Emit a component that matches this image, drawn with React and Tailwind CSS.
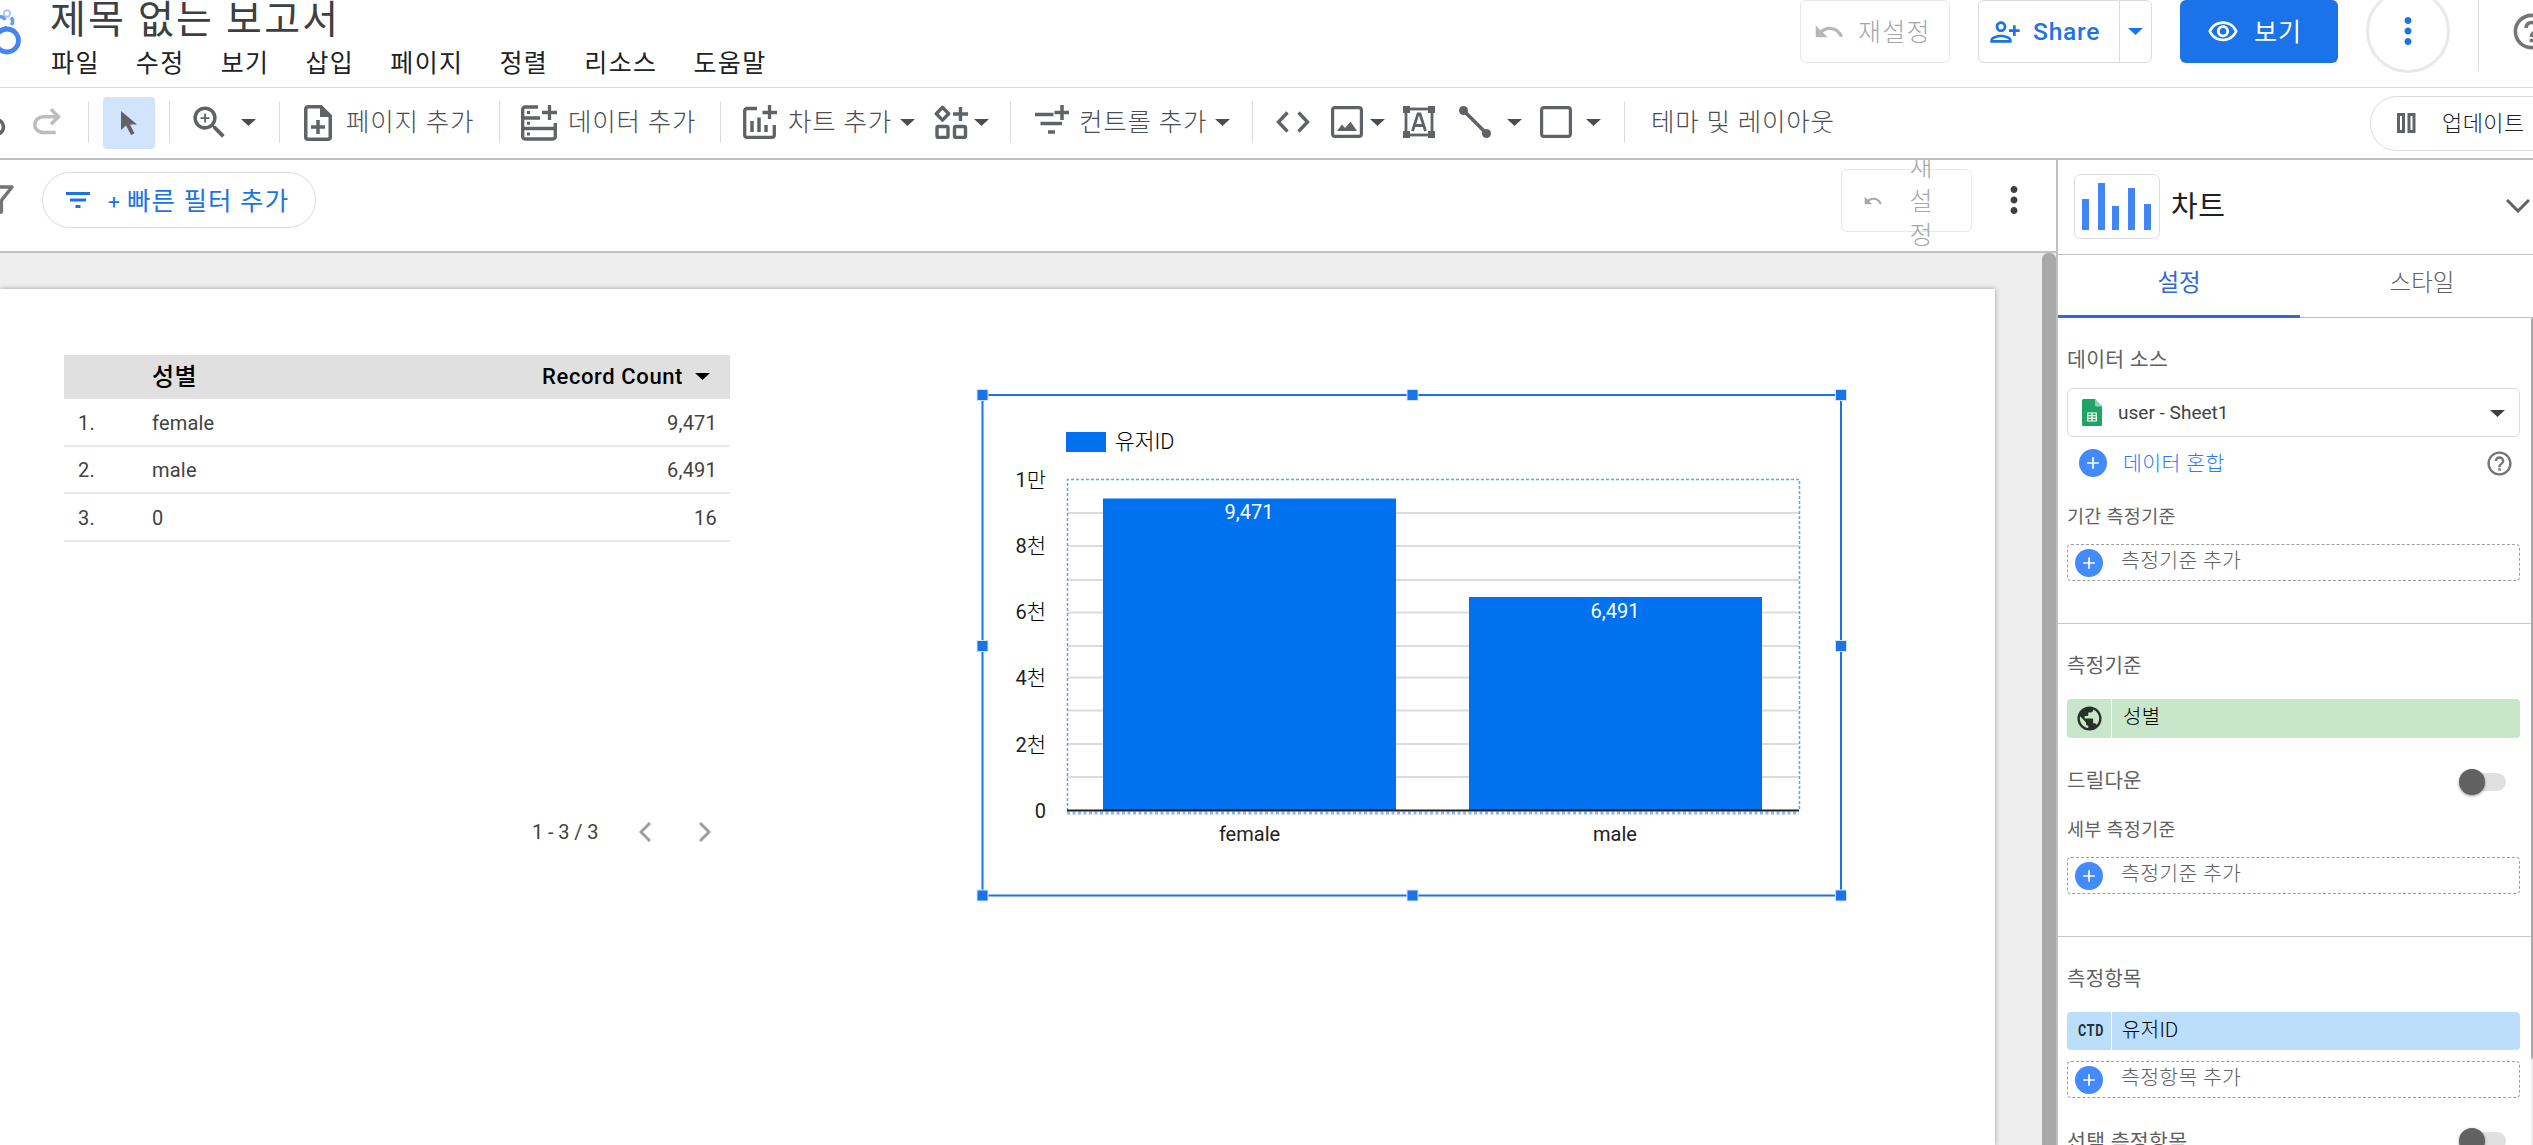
import clsx from "clsx";
import {
  MdAdd,
  MdHelpOutline,
  MdMoreVert,
  MdOutlineFilterAlt,
  MdOutlinePersonAddAlt1,
  MdOutlineVisibility,
  MdPublic,
  MdUndo,
  MdZoomIn,
} from "react-icons/md";

const MENUS = ["파일", "수정", "보기", "삽입", "페이지", "정렬", "리소스", "도움말"];

const TABLE_ROWS = [
  { name: "female", count: "9,471" },
  { name: "male", count: "6,491" },
  { name: "0", count: "16" },
];

const Y_LABELS = [
  { text: "1만", y: 487 },
  { text: "8천", y: 552.5 },
  { text: "6천", y: 618.5 },
  { text: "4천", y: 685 },
  { text: "2천", y: 751.5 },
  { text: "0", y: 817.5 },
];

const GRID_Y = [513, 546, 580, 612.5, 646, 677.5, 710.5, 744, 777];

const HANDLES = [
  [982.5, 395], [1412.5, 395], [1841, 395],
  [982.5, 646], [1841, 646],
  [982.5, 895.5], [1412.5, 895.5], [1841, 895.5],
];

function Caret({ className }) {
  return (
    <svg viewBox="0 0 15 7" className={clsx("h-[7px] w-[15px] shrink-0 fill-current", className)}>
      <path d="M0 0h15L7.500 7z" />
    </svg>
  );
}

function Divider({ className }) {
  return <div className={clsx("h-[42px] w-px shrink-0 bg-[#dadce0]", className)} />;
}

function Logo() {
  return (
    <svg viewBox="0 0 24 60" className="h-[60px] w-6 shrink-0" fill="none">
      <circle cx="7" cy="13.500" r="3.200" stroke="#a8c7fa" strokeWidth="2" />
      <path d="M0 16.500Q4 17 5 20M11 17.500Q14 20.500 11.500 25" stroke="#669df6" strokeWidth="3.500" />
      <path d="M0 30.500L7 27.500" stroke="#3b78e7" strokeWidth="4" />
      <circle cx="7" cy="40.500" r="11.500" stroke="#4285f4" strokeWidth="4.800" />
    </svg>
  );
}

function Header() {
  return (
    <header className="flex h-[88px] shrink-0 border-b border-[#dadce0]">
      <Logo />
      <div className="ml-[26px] flex flex-col pt-px">
        <h1 className="h-[43px] text-[39px] leading-[39px] tracking-[2.2px] whitespace-nowrap text-[#3c4043]">
          제목 없는 보고서
        </h1>
        <nav className="ml-px flex gap-[36px] text-[25px] leading-[39px] tracking-[1.4px] whitespace-nowrap text-[#202124]">
          {MENUS.map((m) => (
            <span key={m}>{m}</span>
          ))}
        </nav>
      </div>
      <div className="ml-auto flex shrink-0">
        <button className="flex h-[63px] w-[150px] items-center rounded-md border border-[#e8e8e8] pl-3 text-[25px] font-light tracking-[1.2px] whitespace-nowrap text-[#a5a7aa]">
          <MdUndo className="mr-[13px] size-8 text-[#b5b7ba]" />
          <span className="mt-0.5">재설정</span>
        </button>
        <div className="ml-7 flex h-[63px] w-[174px] rounded-md border border-[#dadce0] text-[#1a73e8]">
          <button className="flex w-[141px] items-center border-r border-[#dadce0] pl-2.5 text-[24.5px] font-medium tracking-[0.8px]">
            <MdOutlinePersonAddAlt1 className="mr-3 size-8" />
            <span className="mt-0.5">Share</span>
          </button>
          <button className="flex flex-1 items-center justify-center">
            <Caret className="w-[13px]" />
          </button>
        </div>
        <button className="ml-7 flex h-[63px] w-[158px] items-center rounded-md bg-[#1a73e8] pl-[27px] text-[25px] tracking-[1px] whitespace-nowrap text-white">
          <MdOutlineVisibility className="mr-[15px] size-8" />
          <span className="mt-0.5">보기</span>
        </button>
        <button className="-mt-[11px] ml-7 flex size-[84px] items-center justify-center rounded-full border-[3px] border-[#e9e9e9] text-[#1a73e8]">
          <MdMoreVert className="size-[42px]" />
        </button>
        <div className="ml-7 h-[71px] w-px bg-[#dadce0]" />
        <div className="w-[54px] overflow-hidden pt-2.5 pl-[31px]">
          <MdHelpOutline className="size-[43px] text-[#757575]" />
        </div>
      </div>
    </header>
  );
}

function Toolbar() {
  return (
    <div className="flex h-[72px] shrink-0 items-center overflow-hidden border-b-2 border-[#bdc1c6] pb-0.5 text-[25.5px] font-light tracking-[0.8px] whitespace-nowrap text-[#4a4d51]">
      <svg viewBox="0 0 8 42" className="mt-1.5 h-[42px] w-2 shrink-0" fill="none" stroke="#5f6368" strokeWidth="3.500">
        <path d="M-6 15.500h2a7.500 7.500 0 0 1 0 15h-3" />
      </svg>
      <svg viewBox="0 0 24 24" className="ml-[18px] size-[42px] shrink-0 fill-[#bdbdbd]">
        <path d="M9.900 19q-2.425 0-4.163-1.575T4 13.500t1.738-3.925T9.900 8h6.300l-2.600-2.600L15 4l5 5-5 5-1.400-1.400 2.600-2.600H9.900q-1.575 0-2.738 1T6 13.500T7.163 16T9.900 17H17v2z" />
      </svg>
      <Divider className="ml-5" />
      <div className="mt-0.5 ml-3.5 flex h-[52px] w-[52px] shrink-0 items-center justify-center rounded-sm bg-[#d2e3fc]">
        <svg viewBox="0 0 16 24" className="h-6 w-4 fill-[#5f6368]">
          <path d="M0 0v19l5-4.500 5 9.500 3.500-1.500L9 13.500h7z" />
        </svg>
      </div>
      <Divider className="ml-3.5" />
      <MdZoomIn className="ml-[18px] size-[43px] shrink-0 fill-[#5f6368]" />
      <Caret className="ml-[10px]" />
      <Divider className="ml-[23px]" />

      <svg viewBox="0 0 28 36" className="mt-0.5 ml-6 h-9 w-7 shrink-0" fill="none" stroke="#5f6368" strokeWidth="3.500">
        <path d="M17 1.750H4A2.250 2.250 0 0 0 1.750 4v28A2.250 2.250 0 0 0 4 34.250h20A2.250 2.250 0 0 0 26.250 32V11z" />
        <path d="M16 1v11h11z" fill="#5f6368" stroke="none" />
        <path d="M14 15v14M7 22h14" />
      </svg>
      <span className="ml-3.5 w-[153px] shrink-0">페이지 추가</span>
      <Divider />

      <svg viewBox="0 0 36 36" className="mt-0.5 ml-[21px] size-9 shrink-0" fill="none" stroke="#5f6368" strokeWidth="3.300">
        <path d="M17 2H4a2.300 2.300 0 0 0-2.300 2.300v27.400A2.300 2.300 0 0 0 4 34h28a2.300 2.300 0 0 0 2.300-2.300V18M1.700 13H19M1.700 23.500h32.600" />
        <path d="M28.500 0v15M21 7.500h15" />
        <path d="M6 7.500h3M6 18.300h3M6 29h3" strokeWidth="3" />
      </svg>
      <span className="ml-[11px] w-[152px] shrink-0">데이터 추가</span>
      <Divider />

      <svg viewBox="0 0 34 34" className="ml-[22px] size-[34px] shrink-0" fill="none" stroke="#5f6368" strokeWidth="3.300">
        <path d="M14 3.500H4A2.300 2.300 0 0 0 1.700 5.800V30A2.300 2.300 0 0 0 4 32.300h25a2.300 2.300 0 0 0 2.300-2.300V20M26.500 0v14M19.500 7.500h14.500" />
        <path d="M9 16v11M16 12.500V27M23 20v7" strokeWidth="3.500" />
      </svg>
      <span className="ml-[11px] w-[112px] shrink-0">차트 추가</span>
      <Caret />
      <svg viewBox="0 0 34 34" className="ml-[19px] size-[34px] shrink-0" fill="none" stroke="#5f6368" strokeWidth="3.400">
        <path d="M8.500 2.300l6.200 6.400-6.200 6.400-6.200-6.400z" strokeLinejoin="round" />
        <rect x="3" y="21.500" width="11" height="11" rx="1.500" />
        <rect x="20.500" y="21.500" width="11" height="11" rx="1.500" />
        <path d="M26.500 2v14M19 9h15" />
      </svg>
      <Caret className="ml-1.5" />
      <Divider className="ml-[21px]" />

      <svg viewBox="0 0 34 34" className="ml-6 size-[34px] shrink-0" fill="none" stroke="#5f6368" strokeWidth="3.500">
        <path d="M0 9.500h18.500M5.500 18.500H27M13 27h7M27 0v15M19.500 7.500H34" />
      </svg>
      <span className="ml-[10px] w-[136px] shrink-0">컨트롤 추가</span>
      <Caret />
      <Divider className="ml-[22px]" />

      <svg viewBox="0 0 34 22" className="ml-[23px] h-[22px] w-[34px] shrink-0" fill="none" stroke="#5f6368" strokeWidth="3.400">
        <path d="M11.500 1.500L2.500 11l9 9.500M22.500 1.500l9 9.500-9 9.500" />
      </svg>
      <svg viewBox="0 0 32 32" className="ml-[21px] size-8 shrink-0" fill="none" stroke="#5f6368" strokeWidth="3.200">
        <rect x="1.600" y="1.600" width="28.800" height="28.800" rx="2.500" />
        <path d="M6 25l5-6.500 3 3.500 5.500-6.500L26 25z" fill="#5f6368" stroke="none" />
      </svg>
      <Caret className="ml-[7px]" />
      <svg viewBox="0 0 32 32" className="ml-[18px] size-8 shrink-0" fill="none" stroke="#5f6368" strokeWidth="2.800">
        <rect x="3" y="3" width="26" height="26" />
        <path d="M0 0h7v7H0zM25 0h7v7h-7zM0 25h7v7H0zM25 25h7v7h-7z" fill="#5f6368" stroke="none" />
        <path d="M9.500 25L15 8h2l5.500 17M11.500 19.500h9" />
      </svg>
      <svg viewBox="0 0 32 32" className="ml-6 size-8 shrink-0" stroke="#5f6368" strokeWidth="3.500">
        <path d="M4.500 4.500l23 23" />
        <circle cx="4.500" cy="4.500" r="4.500" fill="#5f6368" stroke="none" />
        <circle cx="27.500" cy="27.500" r="4.500" fill="#5f6368" stroke="none" />
      </svg>
      <Caret className="ml-4" />
      <svg viewBox="0 0 32 32" className="ml-[18px] size-8 shrink-0" fill="none" stroke="#5f6368" strokeWidth="3.200">
        <rect x="1.600" y="1.600" width="28.800" height="28.800" rx="2.500" />
      </svg>
      <Caret className="ml-[14px]" />
      <Divider className="ml-[23px]" />
      <span className="ml-[26px] shrink-0">테마 및 레이아웃</span>

      <button className="mt-0.5 ml-auto flex h-[55px] w-[163px] shrink-0 items-center overflow-hidden rounded-l-[27px] border border-r-0 border-[#dadce0] pl-[26px] text-[22px] tracking-[0.4px] text-[#202124] [word-spacing:2px]">
        <svg viewBox="0 0 19 20" className="mr-[26px] h-5 w-[19px] shrink-0" fill="none" stroke="#5f6368" strokeWidth="3">
          <rect x="1.500" y="1.500" width="5" height="17" />
          <rect x="12" y="1.500" width="5" height="17" />
        </svg>
        업데이트 일시중지
      </button>
    </div>
  );
}

function FilterBar() {
  return (
    <div className="flex h-[93px] shrink-0 overflow-hidden border-b-2 border-[#bdc1c6]">
      <div className="flex w-[42px] shrink-0 overflow-hidden pt-[18px]">
        <MdOutlineFilterAlt className="-ml-[22px] size-[43px] shrink-0 text-[#757575]" />
      </div>
      <button className="mt-3 flex h-14 w-[274px] items-center rounded-full border border-[#dadce0] pl-[23px] text-[25.5px] tracking-[1.1px] whitespace-nowrap text-[#1a73e8]">
        <svg viewBox="0 0 24 16" className="mr-[18px] h-4 w-6 shrink-0 fill-current">
          <path d="M0 0h24v3H0zM4 6.500h16v3H4zM9.500 13h5v3h-5z" />
        </svg>
        <span className="mt-1.5 mr-1.5 text-[21px]">+</span>
        <span className="mt-0.5">빠른 필터 추가</span>
      </button>
      <button className="mt-[9px] ml-auto flex h-[63px] w-[131px] items-center rounded-md border border-[#e8e8e8] pl-[21px] text-[#a5a7aa]">
        <MdUndo className="mr-[26px] size-5 shrink-0" />
        <span className="mt-0.5 flex w-6 flex-col text-[25px] leading-[34px] font-light">
          <span>재</span>
          <span>설</span>
          <span>정</span>
        </span>
      </button>
      <MdMoreVert className="mt-[19px] mr-[21px] ml-[21px] size-[42px] text-[#3c4043]" />
    </div>
  );
}

function DataTable() {
  return (
    <div className="absolute top-[102px] left-16 w-[666px] text-[20px] tracking-[0.2px] text-[#424242]">
      <div className="flex h-11 items-center bg-[#e0e0e0] pr-[20px] pb-px pl-[88px] font-medium text-black">
        <span className="text-[24px] tracking-[0.5px]">성별</span>
        <span className="ml-auto text-[22px] tracking-[0.6px]">Record Count</span>
        <Caret className="ml-3 h-[6px] w-[11px]" />
      </div>
      {TABLE_ROWS.map((row, i) => (
        <div key={row.name} className="flex h-[47.500px] items-center border-b-2 border-[#e8e8e8] pt-0.5 pr-[13px] pl-3.5">
          <span className="w-[74px]">{i + 1}.</span>
          <span>{row.name}</span>
          <span className="ml-auto">{row.count}</span>
        </div>
      ))}
    </div>
  );
}

function Pager() {
  return (
    <div className="absolute top-[567px] left-[532px] flex h-6 items-center text-[20px] text-[#424242]">
      <span className="w-[107px] tracking-[-0.1px]">1 - 3 / 3</span>
      <svg viewBox="0 0 12 20" className="h-5 w-3" fill="none" stroke="#9e9e9e" strokeWidth="3">
        <path d="M11 1L2 10l9 9" />
      </svg>
      <svg viewBox="0 0 12 20" className="ml-12 h-5 w-3" fill="none" stroke="#9e9e9e" strokeWidth="3">
        <path d="M1 1l9 9-9 9" />
      </svg>
    </div>
  );
}

function BarChart() {
  return (
    <svg viewBox="970 380 884 530" className="absolute top-[127px] left-[970px] h-[530px] w-[884px]" fontSize="20">
      <rect x="1066" y="432" width="40" height="20" fill="#0072f0" />
      <text x="1115" y="449" fill="#000" fontSize="21.5" fontWeight="300">유저ID</text>
      {Y_LABELS.map((l) => (
        <text key={l.text} x="1046" y={l.y} textAnchor="end" fill="#212121">
          {l.text[0]}
          <tspan fontWeight="300" fontSize="21" fill="#000">{l.text.slice(1)}</tspan>
        </text>
      ))}
      <g stroke="#dcdcdc" strokeWidth="2">
        {GRID_Y.map((y) => (
          <path key={y} d={`M1067 ${y}H1799`} />
        ))}
      </g>
      <rect x="1103" y="498.500" width="293" height="312" fill="#0072f0" />
      <rect x="1469" y="597" width="293" height="213" fill="#0072f0" />
      <path d="M1067.500 811V479.500H1799.500V811" fill="none" stroke="#669df6" strokeDasharray="3 2" strokeWidth="1.500" />
      <path d="M1067 813H1799" stroke="#8ab4f8" strokeDasharray="3 2.500" strokeWidth="3" />
      <path d="M1067 810.500H1799" stroke="#212121" strokeWidth="2" />
      <g textAnchor="middle" fill="#fff">
        <text x="1249" y="519">9,471</text>
        <text x="1615" y="618">6,491</text>
      </g>
      <g textAnchor="middle" fill="#212121">
        <text x="1249.500" y="841">female</text>
        <text x="1615" y="841">male</text>
      </g>
      <rect x="982.500" y="395" width="858.500" height="500.500" fill="none" stroke="#1a73e8" strokeWidth="2" />
      {HANDLES.map(([x, y]) => (
        <rect key={`${x}-${y}`} x={x - 5.5} y={y - 5.5} width="11" height="11" fill="#1a73e8" stroke="#d2e3fc" />
      ))}
    </svg>
  );
}

function Canvas() {
  return (
    <div className="flex min-h-0 flex-1 bg-[#eee]">
      <div className="relative mt-9 w-[1995px] bg-white shadow-[0_0_5px_rgba(0,0,0,0.35)]">
        <div className="absolute inset-x-0 -top-9 h-[892px]">
          <DataTable />
          <Pager />
          <BarChart />
        </div>
      </div>
      <div className="ml-auto w-3.5 rounded-t-md bg-[#a9a9a9]" />
    </div>
  );
}

function AddField({ label, className }) {
  return (
    <div className={clsx("flex h-[37px] w-[453px] shrink-0 items-center rounded border border-dashed border-[#9e9e9e] pl-[7px]", className)}>
      <PlusDot />
      <span className="mb-0.5 ml-[18px] text-[20.5px] font-light tracking-[0.3px] text-[#616161]">{label}</span>
    </div>
  );
}

function PlusDot() {
  return (
    <span className="flex size-7 shrink-0 items-center justify-center rounded-full bg-[#448aff] text-white">
      <MdAdd className="size-5" />
    </span>
  );
}

function FieldLabel({ children, className }) {
  return (
    <div className={clsx("h-6 shrink-0 leading-[26px] whitespace-nowrap text-[#616161]", className)}>{children}</div>
  );
}

function Toggle() {
  return (
    <span className="mr-[25px] flex h-[26px] w-[47px] items-center">
      <span className="z-10 size-[26px] shrink-0 rounded-full bg-[#616161] shadow-[0_1px_3px_rgba(0,0,0,0.4)]" />
      <span className="-ml-[15px] h-[18px] w-9 shrink-0 rounded-full bg-[#e0e0e0]" />
    </span>
  );
}

function SidePanel() {
  return (
    <aside className="flex w-[477px] shrink-0 flex-col overflow-hidden border-l-2 border-[#bdc1c6] whitespace-nowrap">
      <div className="flex h-[95px] shrink-0 items-center border-b border-[#bdc1c6] pl-4">
        <svg viewBox="0 0 86 65" className="-mt-px h-[65px] w-[86px] shrink-0">
          <rect x="0.500" y="0.500" width="85" height="64" rx="6" fill="#fff" stroke="#dadce0" />
          <path d="M8 25h7v31H8zM24 9h7v47h-7zM38 32h7v24h-7zM54 14h7v42h-7zM70 30h7v26h-7z" fill="#4285f4" />
        </svg>
        <span className="mt-px ml-[11px] text-[29px] tracking-[0.5px] text-[#202124]">차트</span>
        <svg viewBox="0 0 24 14" className="mt-[-2px] mr-[3px] ml-auto h-3.5 w-6" fill="none" stroke="#5f6368" strokeWidth="3">
          <path d="M1 1l11 11L23 1" />
        </svg>
      </div>
      <div className="flex h-[63px] shrink-0 border-b border-[#bdbdbd] text-center text-[23.5px] leading-[57px]">
        <div className="-mb-px w-[242px] shrink-0 border-b-[3px] border-[#3367d6] text-[#3367d6]">설정</div>
        <div className="w-[244px] shrink-0 font-light text-[#616161]">스타일</div>
      </div>
      <div className="flex min-h-0 flex-1">
        <div className="flex min-w-0 flex-1 flex-col pl-[9px] text-[20px] tracking-[0.3px]">
          <FieldLabel className="mt-[29px] text-[20.5px]">데이터 소스</FieldLabel>
          <div className="mt-[17px] flex h-[49px] w-[453px] shrink-0 items-center rounded-md border border-[#dadce0] pr-3.5 pl-3.5">
            <svg viewBox="0 0 20 27" className="h-[27px] w-5">
              <path d="M1.500 0H13l7 7.500v18a1.500 1.500 0 0 1-1.500 1.500h-17A1.500 1.500 0 0 1 0 25.500v-24A1.500 1.500 0 0 1 1.500 0z" fill="#1fa463" />
              <path d="M13 0l7 7.500h-5.500A1.500 1.500 0 0 1 13 6z" fill="#8ed1b1" />
              <path d="M5.700 14h8.600v8H5.700zM5.700 16.700h8.600M5.700 19.300h8.600M10 14v8" fill="none" stroke="#fff" strokeWidth="1.200" />
            </svg>
            <span className="mt-px ml-4 text-[19px] tracking-[0.02px] text-[#424242]">user - Sheet1</span>
            <Caret className="mt-0.5 ml-auto text-[#3c4043]" />
          </div>
          <div className="mt-3 flex h-7 shrink-0 items-center pl-3">
            <PlusDot />
            <span className="mt-0.5 ml-[16px] text-[20.5px] font-light tracking-[0.4px] text-[#2f79ff]">데이터 혼합</span>
            <MdHelpOutline className="mr-[17px] ml-auto size-[29px] text-[#757575]" />
          </div>
          <FieldLabel className="mt-[27px] text-[18.5px]">기간 측정기준</FieldLabel>
          <AddField label="측정기준 추가" className="mt-4" />
          <div className="mt-[42px] -ml-[9px] h-px shrink-0 bg-[#c8c8c8]" />

          <FieldLabel className="mt-[29px] text-[20px]">측정기준</FieldLabel>
          <div className="mt-[22px] flex h-[39px] w-[453px] shrink-0 overflow-hidden rounded bg-[#c8e6c9]">
            <span className="flex w-[45px] items-center border-r border-white pl-2">
              <MdPublic className="size-[29px] text-[#263228]" />
            </span>
            <span className="ml-[11px] leading-[36px] font-light text-black">성별</span>
          </div>
          <div className="mt-[31px] flex h-[26px] shrink-0 items-center justify-between">
            <FieldLabel className="-mt-1 text-[20px]">드릴다운</FieldLabel>
            <Toggle />
          </div>
          <FieldLabel className="mt-[22px] text-[18.5px]">세부 측정기준</FieldLabel>
          <AddField label="측정기준 추가" className="mt-4" />
          <div className="mt-[42px] -ml-[9px] h-px shrink-0 bg-[#c8c8c8]" />

          <FieldLabel className="mt-[29px] text-[20px]">측정항목</FieldLabel>
          <div className="mt-[22px] flex h-[38px] w-[453px] shrink-0 overflow-hidden rounded bg-[#bbdefb]">
            <span className="flex w-[45px] items-center border-r border-white pl-[11px]">
              <span className="origin-left scale-x-[0.74] text-[17px] font-bold tracking-[1px] text-[#263238]">CTD</span>
            </span>
            <span className="ml-[10px] leading-[36px] font-light text-black">유저ID</span>
          </div>
          <AddField label="측정항목 추가" className="mt-[11px]" />
          <div className="mt-[30px] flex h-[26px] shrink-0 items-center justify-between">
            <FieldLabel className="text-[20.5px]">선택 측정항목</FieldLabel>
            <Toggle />
          </div>
        </div>
        <div className="w-0.5 shrink-0 bg-[#eee]">
          <div className="h-[741px] rounded-full bg-[#a9a9a9]" />
        </div>
      </div>
    </aside>
  );
}

export default function App() {
  return (
    <div className="flex h-[1145px] w-[2533px] flex-col overflow-hidden bg-white font-[Roboto,'Noto_Sans_CJK_KR',sans-serif]">
      <Header />
      <Toolbar />
      <div className="flex min-h-0 flex-1">
        <div className="flex w-[2056px] shrink-0 flex-col">
          <FilterBar />
          <Canvas />
        </div>
        <SidePanel />
      </div>
    </div>
  );
}
